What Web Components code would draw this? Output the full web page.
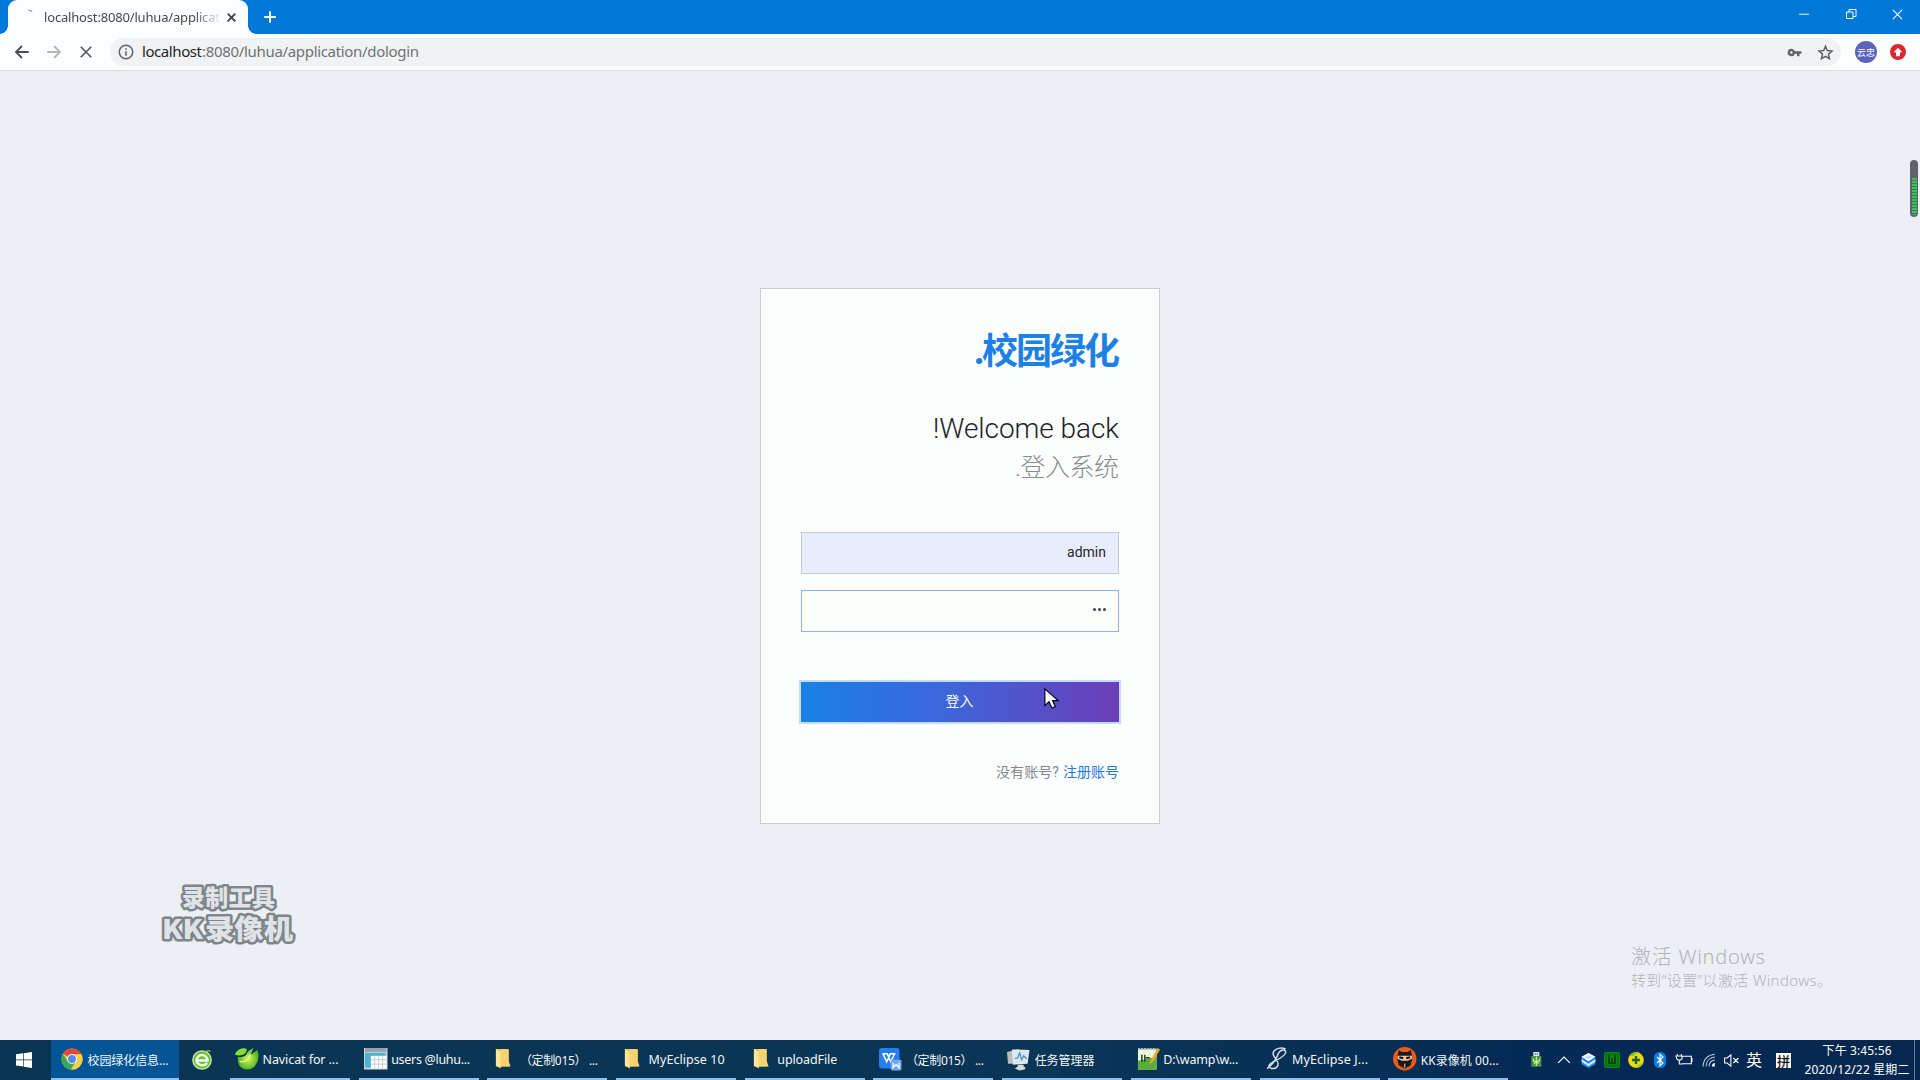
<!DOCTYPE html>
<html lang="zh-CN">
<head>
<meta charset="utf-8">
<title>校园绿化信息管理</title>
<style>
html,body{margin:0;width:1920px;height:1080px;overflow:hidden;background:#eceff4}
body{font-family:"Noto Sans","Noto Sans CJK SC",sans-serif}
</style>
</head>
<body>
<desktop-screen></desktop-screen>
<script>
function define(name, html, setup) {
  const t = document.createElement('template');
  t.innerHTML = html;
  customElements.define(name, class extends HTMLElement {
    connectedCallback() {
      if (this.shadowRoot) return;
      this.attachShadow({mode: 'open'}).appendChild(t.content.cloneNode(true));
      if (setup) setup.call(this, this.shadowRoot);
    }
  });
}

/* A single line of text, tracked so that it fills the width in its "w" attribute. */
define('fit-text', `<style>:host{display:block;white-space:pre;flex:none}span{display:inline-block;white-space:pre}</style><span></span>`, function (root) {
  const s = root.querySelector('span');
  s.textContent = this.getAttribute('text');
  const w = parseFloat(this.getAttribute('w'));
  if (!w) return;
  this.style.width = w + 'px';
  const n = [...s.textContent].length;
  const natural = s.getBoundingClientRect().width;
  s.style.letterSpacing = ((w - natural) / Math.max(1, n - 1)) + 'px';
});

const ICONS = {
  back: '<path d="M21 12H4M12 4l-8 8 8 8" fill="none" stroke="#4c4f52" stroke-width="2.400"/>',
  forward: '<path d="M3 12h17M12 4l8 8-8 8" fill="none" stroke="#b4b7b9" stroke-width="2.400"/>',
  stop: '<path d="M5 5l14 14M19 5L5 19" fill="none" stroke="#55585b" stroke-width="2.200"/>',
  info: '<circle cx="12" cy="12" r="9" fill="none" stroke="#5f6368" stroke-width="2"/><path d="M12 11v6M12 7v2" stroke="#5f6368" stroke-width="2"/>',
  close: '<path d="M5 5l14 14M19 5L5 19" stroke="#3c4043" stroke-width="3.400"/>',
  plus: '<path d="M12 2v20M2 12h20" stroke="#fff" stroke-width="3.400"/>',
  key: '<path fill="#5f6368" fill-rule="evenodd" d="M7 6a6 6 0 1 0 5.700 8H16v4h4v-4h3v-4H12.700A6 6 0 0 0 7 6zm0 4a2 2 0 1 1 0 4 2 2 0 0 1 0-4z"/>',
  star: '<path fill="none" stroke="#5f6368" stroke-width="2.100" d="M12 3.200l2.600 6.100 6.600.6-5 4.400 1.500 6.500L12 17.400l-5.700 3.400 1.500-6.500-5-4.400 6.600-.6z"/>',
  update: '<circle cx="12" cy="12" r="12" fill="#da2830"/><path d="M12 5.500l6.500 6.700H15v6H9v-6H5.500z" fill="#fff"/>',
  min: '<path d="M2 12.500h20" stroke="#fff" stroke-width="1.800"/>',
  restore: '<path d="M3 8h13v13H3zM8 8V3h14v14h-6" fill="none" stroke="#fff" stroke-width="2"/>',
  winclose: '<path d="M2 2l20 20M22 2L2 22" stroke="#fff" stroke-width="2.400"/>',
  win: '<path fill="#fff" d="M0 3.300L10.500 2v9.300H0zM11.500 1.800L24 0v11.300H11.500zM0 12.500h10.500v9.300L0 20.400zM11.500 12.500H24V24l-12.500-1.800z"/>',
  chrome: '<circle cx="12" cy="12" r="11.500" fill="#f9cf45"/><path d="M12 12L2 6.300A11.500 11.500 0 0 1 22.200 6.700H12z" fill="#e04a3b"/><path d="M2 6.300a11.500 11.500 0 0 0 9 17.200l5.100-8.900L12 12 7.500 14.600z" fill="#3aa757"/><path d="M11 23.500l5.600-8.900 1-7.900h4.600A11.500 11.500 0 0 1 11 23.500z" fill="#f9cf45"/><circle cx="12" cy="12" r="5.500" fill="#eef5ff"/><circle cx="12" cy="12" r="4.300" fill="#5289ee"/>',
  ie: '<circle cx="12" cy="12" r="11" fill="#6bbd39" stroke="#c4eda9" stroke-width="1.600"/><path d="M18.500 12.500H5.500a6.500 6.500 0 0 1 13 0zM5.500 12.500c.3 6 9.500 8 12.500 3" fill="none" stroke="#f4ffe9" stroke-width="3"/><path d="M15 3c3-2 6-3 7-1" fill="none" stroke="#b7cb42" stroke-width="1.400"/>',
  navicat: '<defs><radialGradient id="n"><stop offset="0" stop-color="#d9fa5c"/><stop offset="1" stop-color="#4eb526"/></radialGradient></defs><path d="M3 10c3 1 8 0 9-3 1-3 4-5 7-6l-3 7 7-5c3 9-1 20-11 20-6 0-10-5-9-13z" fill="url(#n)"/><path d="M0 8c1-5 8-8 12-6 0 5-5 8-12 6z" fill="#87db31"/><path d="M5 15c4 1 9-2 11-7" fill="none" stroke="#e3ff8c" stroke-width="1.300"/>',
  table: '<path d="M0 1h24v22H0z" fill="#cdd3d8"/><path d="M1 1h22v4H1z" fill="#99a2aa"/><path d="M1 6h21v15H1z" fill="#4db4cf"/><path d="M7 9h16v13H7z" fill="#fff"/><path d="M7 13h16M7 17.500h16M11 9v13M15 9v13M19 9v13" stroke="#c7ccd2" stroke-width="1"/>',
  folder: '<path d="M4 2h8l1 1h4v17H4z" fill="#edc24b"/><path d="M4 2l5 3v17l-5-3z" fill="#ffe69a"/><path d="M9 5V2h8v12l2 6H9z" fill="#f9d46e"/>',
  wps: '<rect x="1" y="1" width="21" height="21" rx="3" fill="#2580ef"/><path d="M4.500 7h5l3.500 8 4-8h-5M5 7l4 8 3.500-8" fill="none" stroke="#fff" stroke-width="1.500"/><rect x="13" y="13" width="11" height="11" rx="1.500" fill="#72a6f9"/><path d="M15.500 16v5l3-3 3 3v-5" fill="none" stroke="#fff" stroke-width="1.400"/>',
  taskmgr: '<path d="M0 5l12-3v15H1z" fill="#b9bebe"/><path d="M5 2.500L23 3l-2 14-15 1z" fill="#e5e8e6"/><path d="M8 4.500l13 .5-1.500 10L9 16z" fill="#d4e8f2"/><path d="M8 12l3-1 2-5 2 7 2-4 3 3" fill="none" stroke="#4a91b9" stroke-width="1.300"/><path d="M11 18h6v2l2 1-1 2-5 1-5-2 3-2z" fill="#d8dad9"/>',
  notepad: '<path d="M2 2h19v21H2z" fill="#edf7df"/><path d="M2 14l19-4v13H2z" fill="#57ae38"/><path d="M2 2h19" stroke="#b6c0ac" stroke-width="2" stroke-dasharray="2 1"/><path d="M6 8v7M9 8v7M10 11h4" stroke="#273b23" stroke-width="1.500"/><path d="M14 18l1.500-5L22 1l2.500 1.500L18 14z" fill="#eda72b"/>',
  eclipse: '<path d="M21 2C14-1 6 4 9 9c2 4 6 6 4 10-2 5-10 3-9 0 1-4 15-7 17-13 1-4-5-4-7 0-2 5-6 12-12 16" fill="none" stroke="#d0dbe9" stroke-width="1.500"/>',
  kk: '<circle cx="12" cy="12" r="12" fill="#ee5b18"/><path d="M6 3l3 2h6l3-2 2 8-2 8-6 3-6-3-2-8z" fill="#1b1b1b"/><path d="M4.500 9h15v3l-4.500 2H9l-4.500-2z" fill="#f7c69f"/><path d="M6.500 10.500l4 1M17.500 10.500l-4 1" stroke="#111" stroke-width="2"/><path d="M12 17v4" stroke="#d7e3ed"/>',
  usb: '<path d="M8 0h9v6H8z" fill="#dceafb"/><path d="M10 2h2v2h-2zM13 2h2v2h-2z" fill="#346fae"/><path d="M5 6h15v16H5z" fill="#499b36"/><path d="M12.500 7v14M8 10v4h9v-4M9 18l3.500-4 3.500 4" fill="none" stroke="#eaffdf" stroke-width="1.400"/>',
  caret: '<path d="M2 17L12 7l10 10" fill="none" stroke="#fff" stroke-width="2"/>',
  cube: '<path d="M12 0l11 6v12l-11 6-11-6V6z" fill="#2388f3"/><path d="M12 0l11 6-11 7L1 6z" fill="#fff"/><path d="M12 3.500l6 3-6 3.500-6-3.500z" fill="#b8dcff"/><path d="M1 10l11 7 11-7v4l-11 7-11-7z" fill="#d8edff"/>',
  green: '<rect x="0" y="0" width="24" height="24" rx="3" fill="#078b17"/><path d="M3 3h18v18H3z" fill="none" stroke="#035a12" stroke-width="1.500"/><path d="M7.500 5v12h9V5M12 9v8" fill="none" stroke="#033f0b" stroke-width="2.500"/>',
  yellow: '<circle cx="12" cy="12" r="11.800" fill="#f2d80e"/><path d="M2 6a12 12 0 0 1 16-5c-5 0-8 2-10 5z" fill="#75c82b"/><path d="M22 18a12 12 0 0 1-14 5c5 0 8-3 10-6z" fill="#9fd126"/><path d="M12 6v12M6 12h12" stroke="#17662d" stroke-width="3.500"/>',
  bt: '<rect x="3" y="0" width="18" height="24" rx="8" fill="#087bea"/><path d="M7.500 7.500l9 9-4.500 4V3.500l4.500 4-9 9" fill="none" stroke="#fff" stroke-width="1.700"/>',
  power: '<path d="M9 6.500h14v11H9M24 9.500v5M8 6V3M2 6V3M0 6h9v4l-2 2H3l-2-2zM5 12v6h5" fill="none" stroke="#fff" stroke-width="1.600"/>',
  wifi: '<path d="M2 23C2 11 10 3 22 2M7 23C7 14 13 8 22 7M12 23c0-6 4-10 10-11" fill="none" stroke="#c0ccda" stroke-width="1.800"/><path d="M17 23c0-4 2-6 5-6v6z" fill="#fff"/>',
  mute: '<path d="M1 8h4l6-5v18l-6-5H1zM15 8l8 8M23 8l-8 8" fill="none" stroke="#fff" stroke-width="1.700"/>',
  cursor: '<path d="M1 1v20l5-4.500L9.500 24l4-1.700L10.300 15H17z" fill="#fff" stroke="#070720" stroke-width="1.500"/>'
};
define('ui-icon', `<style>:host{display:block;flex:none;width:24px;height:24px}svg{display:block;width:100%;height:100%;overflow:visible}</style><svg viewBox="0 0 24 24"></svg>`, function (root) {
  root.querySelector('svg').innerHTML = ICONS[this.getAttribute('name')];
  const s = this.getAttribute('s');
  if (s) { this.style.width = this.style.height = s + 'px'; }
});

define('title-bar', `<style>
:host{display:flex;height:34px;background:#0078d7;padding-left:8px;align-items:stretch;justify-content:space-between}
.l,.r,.tab{display:flex;align-items:center}
.tab{position:relative;width:240px;height:34px;background:#fdfefe;border-radius:9px 9px 0 0;box-sizing:border-box;padding-left:36px}
.tab:before,.tab:after{content:"";position:absolute;bottom:0;width:8px;height:8px}
.tab:before{left:-8px;background:radial-gradient(circle at 0 0,#0078d7 7.500px,#fdfefe 8px)}
.tab:after{right:-8px;background:radial-gradient(circle at 100% 0,#0078d7 7.500px,#fdfefe 8px)}
.spin{position:absolute;left:20px;top:9.500px;width:4px;height:2px;border-top:1px solid #858d96;transform:rotate(18deg)}
fit-text{font-size:13px;color:#45484b;-webkit-mask:linear-gradient(90deg,#000 150px,transparent 178px)}
.x{margin-left:5px}.plus{margin-left:15px}
.r{gap:35px;padding:0 17.500px 6px 0}
</style><div class="l"><div class="tab"><span class="spin"></span><fit-text w="176" text="localhost:8080/luhua/applicat"></fit-text><ui-icon class="x" name="close" s="13"></ui-icon></div><ui-icon class="plus" name="plus" s="14"></ui-icon></div>
<div class="r"><ui-icon name="min" s="12"></ui-icon><ui-icon name="restore" s="12"></ui-icon><ui-icon name="winclose" s="11"></ui-icon></div>`);

define('address-bar', `<style>
:host{display:flex;align-items:center;height:37px;box-sizing:border-box;background:#fdfefe;border-bottom:1px solid #d9dbdf;padding:0 14px 0 13px}
.nav{display:flex;gap:14px;width:97px}
.box{display:flex;align-items:center;flex:1;height:28px;background:#f1f2f3;border-radius:14px;padding:0 7px 0 7px}
.url{display:flex;margin:-2px 0 0 7px;font-size:15px;flex:1;color:#6f7275}.host{color:#222427}
.star{margin-left:15px}
.av{width:22px;height:22px;border-radius:50%;background:#5c63bb;margin:0 13px 0 14px;color:#fff;font-size:9px;display:flex;align-items:center;justify-content:center;line-height:1}
</style><div class="nav"><ui-icon name="back" s="18"></ui-icon><ui-icon name="forward" s="18"></ui-icon><ui-icon name="stop" s="18"></ui-icon></div>
<div class="box"><ui-icon name="info" s="18"></ui-icon><div class="url"><fit-text class="host" w="60" text="localhost"></fit-text><fit-text w="217" text=":8080/luhua/application/dologin"></fit-text></div><ui-icon name="key" s="15"></ui-icon><ui-icon class="star" name="star" s="17"></ui-icon></div><div class="av">云忠</div><ui-icon name="update" s="16"></ui-icon>`);

define('login-field', `<style>:host{display:flex;box-sizing:border-box;height:42px;align-items:center;justify-content:flex-end;border:1px solid #c5cbdd;padding:0 12px 2px;background:#e8ecfb;font:14px Roboto,sans-serif;color:#26282f}
:host([focused]){border-color:#8fb0ea;background:#fcfefc;margin-top:16px}</style><slot></slot>`);
define('login-button', `<style>:host{display:flex;height:40px;margin-top:50.500px;box-sizing:border-box;padding:0 1px 5px 0;align-items:center;justify-content:center;background:linear-gradient(90deg,#1981e4,#3b68dc 42%,#6c3eb9);box-shadow:0 0 0 2px #c3dcf8;color:#fff;font-size:14px}</style><slot></slot>`);

define('login-card', `<style>
:host{display:flex;flex-direction:column;width:400px;height:536px;box-sizing:border-box;background:#fcfefd;border:1px solid #c9ccd2;padding:35px 40px 0}
.brand,.hello,.sub,.foot{display:flex;justify-content:flex-end}
.brand{font:700 36px/54px "Noto Sans","Noto Sans CJK SC",sans-serif;color:#1c80e5;margin-right:-1px}
.hello{font:300 28px/34px Roboto,sans-serif;color:#202226;margin-top:34px}
.sub{font:300 25px/34px Roboto,"Noto Sans CJK SC",sans-serif;color:#898b90;margin-top:5px}
form{display:block;margin-top:47px}
.dots{display:flex;gap:1.500px}.dots i{width:3.500px;height:3.500px;border-radius:50%;background:#3e4044}
.foot{font:14px/20px Roboto,"Noto Sans CJK SC",sans-serif;color:#85878f;margin-top:40px;gap:4px}.foot .a{color:#2478dc}
</style><div class="brand"><fit-text w="146" text=".校园绿化"></fit-text></div>
<div class="hello"><fit-text w="186" text="!Welcome back"></fit-text></div>
<div class="sub"><fit-text w="104" text=".登入系统"></fit-text></div>
<form><login-field><fit-text w="39" text="admin"></fit-text></login-field><login-field focused><span class="dots"><i></i><i></i><i></i></span></login-field><login-button>登入</login-button></form>
<div class="foot"><fit-text w="63" text="没有账号?"></fit-text><fit-text class="a" w="56" text="注册账号"></fit-text></div>`);

define('recorder-mark', `<style>:host{position:absolute;left:160px;top:882px;width:140px;height:70px}svg{display:block;overflow:visible}text{font-family:"Noto Sans CJK SC",sans-serif;font-weight:900;fill:#dfe2e6;stroke:#7f858a;stroke-width:5px;paint-order:stroke;stroke-linejoin:round}</style>
<svg width="140" height="70"><text x="22" y="24" font-size="23" textLength="93">录制工具</text><text x="2" y="56.500" font-size="27" textLength="41" lengthAdjust="spacingAndGlyphs">KK</text><text x="45" y="56.500" font-size="27" textLength="88" lengthAdjust="spacingAndGlyphs">录像机</text></svg>`);
define('activation-mark', `<style>:host{position:absolute;left:1631px;top:941px;color:#b0b4ba;display:flex;flex-direction:column}.a{font-size:20px;line-height:31px;font-weight:300}.b{font-size:15px;line-height:18px;font-weight:300;margin-top:-1px}</style>
<fit-text class="a" w="134" text="激活 Windows"></fit-text><fit-text class="b" w="201" text="转到“设置”以激活 Windows。"></fit-text>`);
define('volume-gauge', `<style>:host{position:absolute;left:1910px;top:160px;width:8px;height:57px;box-sizing:border-box;border-radius:4px;background:#606469;padding:18px 1.500px 2px}div{height:100%;border-radius:0 0 3px 3px;background:repeating-linear-gradient(#41bd61 0 2px,#3c7f50 2px 3px)}</style><div></div>`);
define('mouse-pointer', `<style>:host{position:absolute;left:1043.500px;top:688px}</style><ui-icon name="cursor" s="20"></ui-icon>`);

define('task-button', `<style>
:host{display:flex;box-sizing:border-box;width:120px;height:40px;align-items:center;padding:0 0 0 5px;border-bottom:2px solid #8fc0ed;font-size:12.500px;color:#f3f7fa;flex:none}
:host([cjk]){font-size:12px}
:host([active]){width:128px;background:#045596;padding-left:9.500px}
fit-text{margin:1px 0 0 4px}
:host([active]) fit-text{margin-left:5px}
</style>`, function (root) {
  const s = this.hasAttribute('active') ? 22 : 23.5;
  root.innerHTML += `<ui-icon name="${this.getAttribute('icon')}" s="${s}"></ui-icon><fit-text w="${this.getAttribute('w')}" text="${this.getAttribute('label')}"></fit-text>`;
});

define('task-bar', `<style>
:host{display:flex;height:40px;background:linear-gradient(90deg,#0a3552,#093556 55%,#052a55 80%,#04264f);color:#fff}
.start{width:51px;display:flex;align-items:center;padding-left:16px;box-sizing:border-box}
.ie{width:51px;box-sizing:border-box;display:flex;align-items:center;padding-left:13px}
.tasks{display:flex;gap:8.700px;width:1278px}
.tray{display:flex;align-items:center;padding-left:19px;flex:1}
.tray .c{width:24px;display:flex;justify-content:center}
.ying{font-size:16px;margin-left:5px;width:16px;line-height:1}
.pin{width:15px;height:15px;background:#fff;color:#111;font:500 13px/15px "Noto Sans CJK SC",sans-serif;text-align:center;margin-left:14px}
.clock{display:flex;flex-direction:column;align-items:center;margin-left:13px;width:106px;font-size:12px;line-height:19px}
.edge{width:1px;height:40px;background:#63798f;margin-left:4px}
</style><div class="start"><ui-icon name="win" s="16"></ui-icon></div>
<task-button active cjk icon="chrome" w="81" label="校园绿化信息..."></task-button>
<div class="ie"><ui-icon name="ie" s="20"></ui-icon></div>
<div class="tasks">
<task-button icon="navicat" w="76" label="Navicat for ..."></task-button>
<task-button icon="table" w="79" label="users @luhu..."></task-button>
<task-button cjk icon="folder" w="78" label="（定制015） ..."></task-button>
<task-button icon="folder" w="76" label="MyEclipse 10"></task-button>
<task-button icon="folder" w="60" label="uploadFile"></task-button>
<task-button cjk icon="wps" w="78" label="（定制015） ..."></task-button>
<task-button cjk icon="taskmgr" w="60" label="任务管理器"></task-button>
<task-button icon="notepad" w="75" label="D:\\wamp\\w..."></task-button>
<task-button icon="eclipse" w="76" label="MyEclipse J..."></task-button>
<task-button cjk icon="kk" w="78" label="KK录像机 00..."></task-button>
</div>
<div class="tray"><div class="c" style="margin-left:-4px;width:26px"><ui-icon name="usb" s="16"></ui-icon></div><div class="c" style="width:30px"><ui-icon name="caret" s="14"></ui-icon></div><div class="c" style="margin-left:-3px"><ui-icon name="cube" s="15"></ui-icon></div><div class="c"><ui-icon name="green" s="16"></ui-icon></div><div class="c"><ui-icon name="yellow" s="16"></ui-icon></div><div class="c"><ui-icon name="bt" s="16"></ui-icon></div><div class="c"><ui-icon name="power" s="16"></ui-icon></div><div class="c" style="width:25px"><ui-icon name="wifi" s="14"></ui-icon></div><div class="c" style="width:20px"><ui-icon name="mute" s="15"></ui-icon></div>
<div class="ying">英</div><div class="pin">拼</div>
<div class="clock"><fit-text w="69" text="下午 3:45:56"></fit-text><fit-text w="105" text="2020/12/22 星期二"></fit-text></div><div class="edge"></div></div>`);

define('desktop-screen', `<style>
:host{display:flex;flex-direction:column;width:1920px;height:1080px;position:relative;overflow:hidden;background:#eceff4}
main{flex:1;display:flex;justify-content:center;align-items:center;padding-bottom:0}
</style><title-bar></title-bar><address-bar></address-bar><main><login-card></login-card></main><task-bar></task-bar>
<recorder-mark></recorder-mark><activation-mark></activation-mark><volume-gauge></volume-gauge><mouse-pointer></mouse-pointer>`);
</script>
</body>
</html>
